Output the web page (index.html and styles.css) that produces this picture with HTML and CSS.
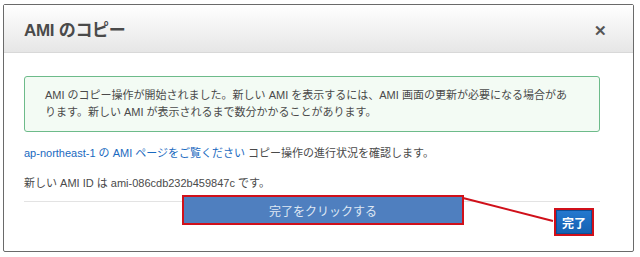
FILE: index.html
```html
<!DOCTYPE html>
<html lang="ja">
<head>
<meta charset="utf-8">
<link rel="stylesheet" href="styles.css">
</head>
<body>
<div class="dialog">
  <div class="header">
    <h1 class="title">AMI のコピー</h1>
    <span class="close">&#x2715;</span>
  </div>
  <div class="content">
    <div class="alert">AMI のコピー操作が開始されました。新しい AMI を表示するには、AMI 画面の更新が必要になる場合があ<br>ります。新しい AMI が表示されるまで数分かかることがあります。</div>
    <p class="line"><a class="link">ap-northeast-1 の AMI ページをご覧ください</a> コピー操作の進行状況を確認します。</p>
    <p class="line id-line">新しい AMI ID は ami-086cdb232b459847c です。</p>
    <div class="footer">
      <button class="done">完了</button>
    </div>
  </div>
</div>
<div class="callout">完了をクリックする</div>
<svg class="connector" width="640" height="257" viewBox="0 0 640 257"><line x1="463" y1="198" x2="553" y2="221" stroke="#d0101a" stroke-width="2"/></svg>
</body>
</html>
```
FILE: styles.css
```css
* { box-sizing: border-box; }
body {
  margin: 0;
  background: #fff;
  font-family: "Liberation Sans", "Noto Sans CJK JP", sans-serif;
  color: #444;
  position: relative;
  width: 640px;
  height: 257px;
  overflow: hidden;
}
.dialog {
  margin: 4px 0 0 3px;
  width: 631px;
  height: 248px;
  border: 1px solid #6a6a6a;
  border-radius: 2px;
  background: #fff;
}
.header {
  height: 48px;
  display: flex;
  align-items: center;
  justify-content: space-between;
  padding: 0 26px 0 20px;
  background: linear-gradient(#ffffff, #e6e6e6);
  border-bottom: 1px solid #d8d8d8;
}
.title {
  margin: 0;
  font-size: 17px;
  font-weight: bold;
  color: #4a4a4a;
  letter-spacing: -0.3px;
}
.close {
  font-size: 15px;
  font-weight: bold;
  color: #555;
  margin-top: 4px;
}
.content {
  padding: 23px 33px 0 20px;
}
.alert {
  border: 1px solid #6dbb8a;
  background: #f3fbf4;
  border-radius: 3px;
  padding: 10px 20px;
  font-size: 11px;
  line-height: 17px;
  color: #4a4a4a;
}
.line {
  margin: 13px 0 0 0;
  font-size: 11px;
  line-height: 17px;
  color: #4a4a4a;
}
.link { color: #1a6ac0; }
.id-line { margin-top: 13px; }
.footer {
  margin-top: 9px;
  border-top: 1px solid #e3e3e3;
  padding-top: 6px;
  display: flex;
  justify-content: flex-end;
  padding-right: 6px;
}
.done {
  width: 40px;
  height: 28px;
  border: 2px solid #d0101a;
  background: linear-gradient(#2479d0, #1560b0);
  color: #fff;
  font-family: "Noto Sans CJK JP", sans-serif;
  font-weight: bold;
  font-size: 12px;
  padding: 0;
  box-shadow: inset 0 0 0 1px #0d4f96;
}
.callout {
  position: absolute;
  left: 182px;
  top: 195px;
  width: 282px;
  height: 30px;
  background: #4f7fbf;
  border: 2px solid #d0101a;
  color: #dfe8f4;
  font-size: 12px;
  display: flex;
  align-items: center;
  justify-content: center;
}
.connector {
  position: absolute;
  left: 0;
  top: 0;
  pointer-events: none;
}
```
